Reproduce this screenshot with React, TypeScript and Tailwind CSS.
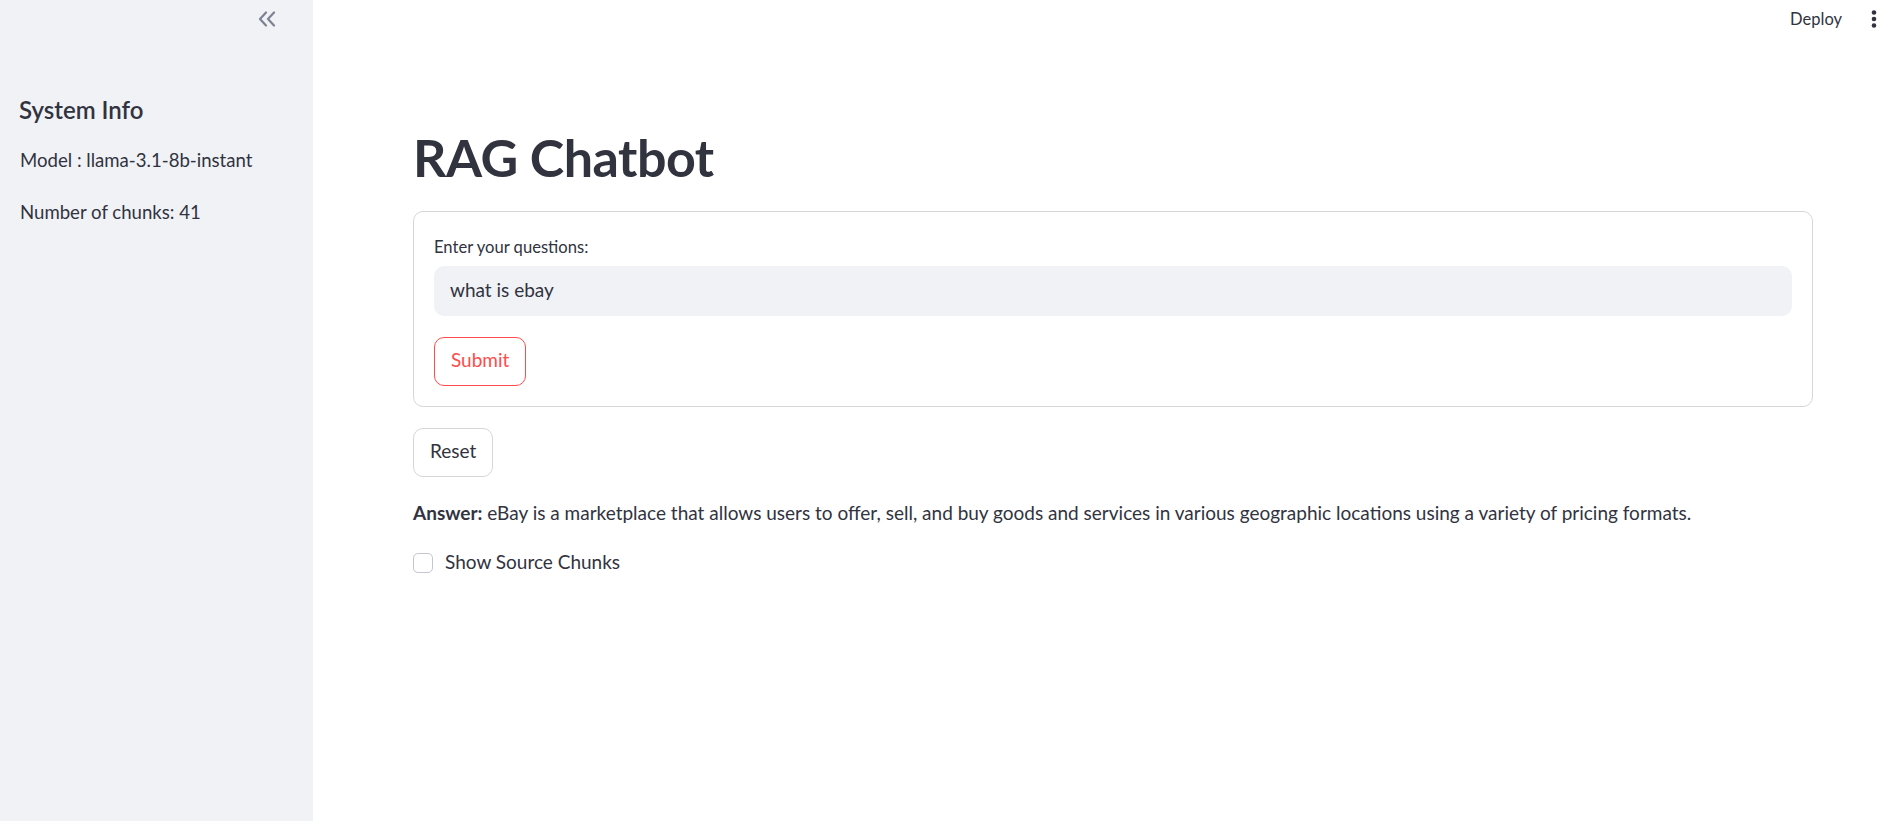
import React from "react";

const font = { fontFamily: "Lato, 'Noto Sans', sans-serif" };

export default function App() {
  return (
    <div className="flex w-[1890px] h-[821px] bg-white text-[#31333f] overflow-hidden" style={font}>
      <aside className="w-[313px] shrink-0 bg-[#f0f2f6] h-full flex flex-col px-[20px]">
        <div className="flex justify-end pt-[11px] pr-[17px]">
          <svg width="18" height="16" viewBox="0 0 18 16" fill="none" stroke="#7d8192" strokeWidth="2.2" strokeLinecap="round" strokeLinejoin="round">
            <path d="M8 1.5L2 8l6 6.5" />
            <path d="M16 1.5L10 8l6 6.5" />
          </svg>
        </div>
        <h3 className="mt-[67px] text-[24px] font-semibold leading-[32px] -ml-[1px]">System Info</h3>
        <p className="mt-[18px] text-[18.6px] leading-[32px]">Model : llama-3.1-8b-instant</p>
        <p className="mt-[20px] text-[18.6px] leading-[32px]">Number of chunks: 41</p>
      </aside>
      <main className="flex-1 relative">
        <div className="absolute top-0 right-0 flex items-center h-[38px] gap-[29px] pr-[13px]">
          <span className="text-[16.5px]">Deploy</span>
          <svg width="6" height="20" viewBox="0 0 6 20" fill="#31333f">
            <circle cx="3" cy="3.5" r="2.3" />
            <circle cx="3" cy="10" r="2.3" />
            <circle cx="3" cy="16.5" r="2.3" />
          </svg>
        </div>
        <div className="pl-[100px] pt-[124px] w-[1500px] flex flex-col">
          <h1 className="text-[52px] font-bold leading-[66px] tracking-[-0.5px]">RAG Chatbot</h1>
          <div className="mt-[21px] w-[1400px] border border-[#d6d6d9] rounded-[10px] px-[20px] pt-[22px] pb-[20px] flex flex-col">
            <label className="text-[16.6px] leading-[26px]">Enter your questions:</label>
            <div className="mt-[6px] h-[50px] rounded-[10px] bg-[#f0f2f6] flex items-center px-[16px] pb-[2px] text-[19px]">what is ebay</div>
            <div className="mt-[21px]">
              <button className="h-[49px] px-[16px] pb-[2px] rounded-[10px] border border-[#ff4b4b] text-[#ff4b4b] text-[19px] bg-white">Submit</button>
            </div>
          </div>
          <div className="mt-[21px]">
            <button className="h-[49px] px-[16px] pb-[2px] rounded-[10px] border border-[#d6d6d9] text-[19px] bg-white">Reset</button>
          </div>
          <p className="mt-[20px] text-[19px] leading-[32px]"><span className="font-bold">Answer:</span> eBay is a marketplace that allows users to offer, sell, and buy goods and services in various geographic locations using a variety of pricing formats.</p>
          <div className="mt-[18px] flex items-center h-[32px]">
            <div className="w-[20px] h-[20px] rounded-[5px] border border-[#c5c7ce] bg-white"></div>
            <span className="ml-[12px] text-[19px] pb-[1px]">Show Source Chunks</span>
          </div>
        </div>
      </main>
    </div>
  );
}
